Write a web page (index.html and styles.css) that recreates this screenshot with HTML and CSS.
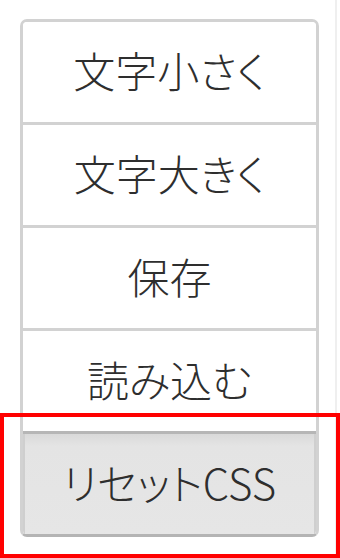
FILE: index.html
```html
<!DOCTYPE html>
<html lang="ja">
<head>
<meta charset="utf-8">
<link rel="stylesheet" href="styles.css">
</head>
<body>
<div class="page">
  <div class="list">
    <div class="btn">文字小さく</div>
    <div class="btn">文字大きく</div>
    <div class="btn">保存</div>
    <div class="btn">読み込む</div>
    <div class="btn active">リセットCSS</div>
  </div>
</div>
<div class="highlight"></div>
</body>
</html>
```

FILE: styles.css
```css
html, body {
  margin: 0;
  padding: 0;
  background: #ffffff;
}
body {
  width: 340px;
  height: 558px;
  overflow: hidden;
  position: relative;
  font-family: "Noto Sans CJK JP", "Noto Sans", sans-serif;
}
.page {
  width: 337px;
  height: 558px;
  box-sizing: border-box;
  border-right: 2px solid #efefef;
  padding: 19px 0 0 20px;
}
.list {
  width: 299px;
  box-sizing: border-box;
  border: 3px solid #d2d2d2;
  border-bottom-color: #b4b4b4;
  border-radius: 7px;
  overflow: hidden;
  display: flex;
  flex-direction: column;
}
.btn {
  height: 100px;
  box-sizing: border-box;
  padding-bottom: 5px;
  display: flex;
  align-items: center;
  justify-content: center;
  font-size: 42px;
  font-weight: 300;
  font-feature-settings: "palt";
  color: #2e2e2e;
  background: #ffffff;
  line-height: 1;
}
.btn + .btn {
  height: 103px;
  border-top: 3px solid #d2d2d2;
}
.btn.active {
  border-top-color: #b6b6b6;
  background: linear-gradient(#d9d9d9, #e4e4e4 12%, #e6e6e6);
  box-shadow: inset 2px 0 0 #cfcfcf, inset -2px 0 0 #cfcfcf;
}
.highlight {
  position: absolute;
  left: 0;
  top: 413px;
  width: 340px;
  height: 145px;
  box-sizing: border-box;
  border: 4px solid #ff0000;
}
```
